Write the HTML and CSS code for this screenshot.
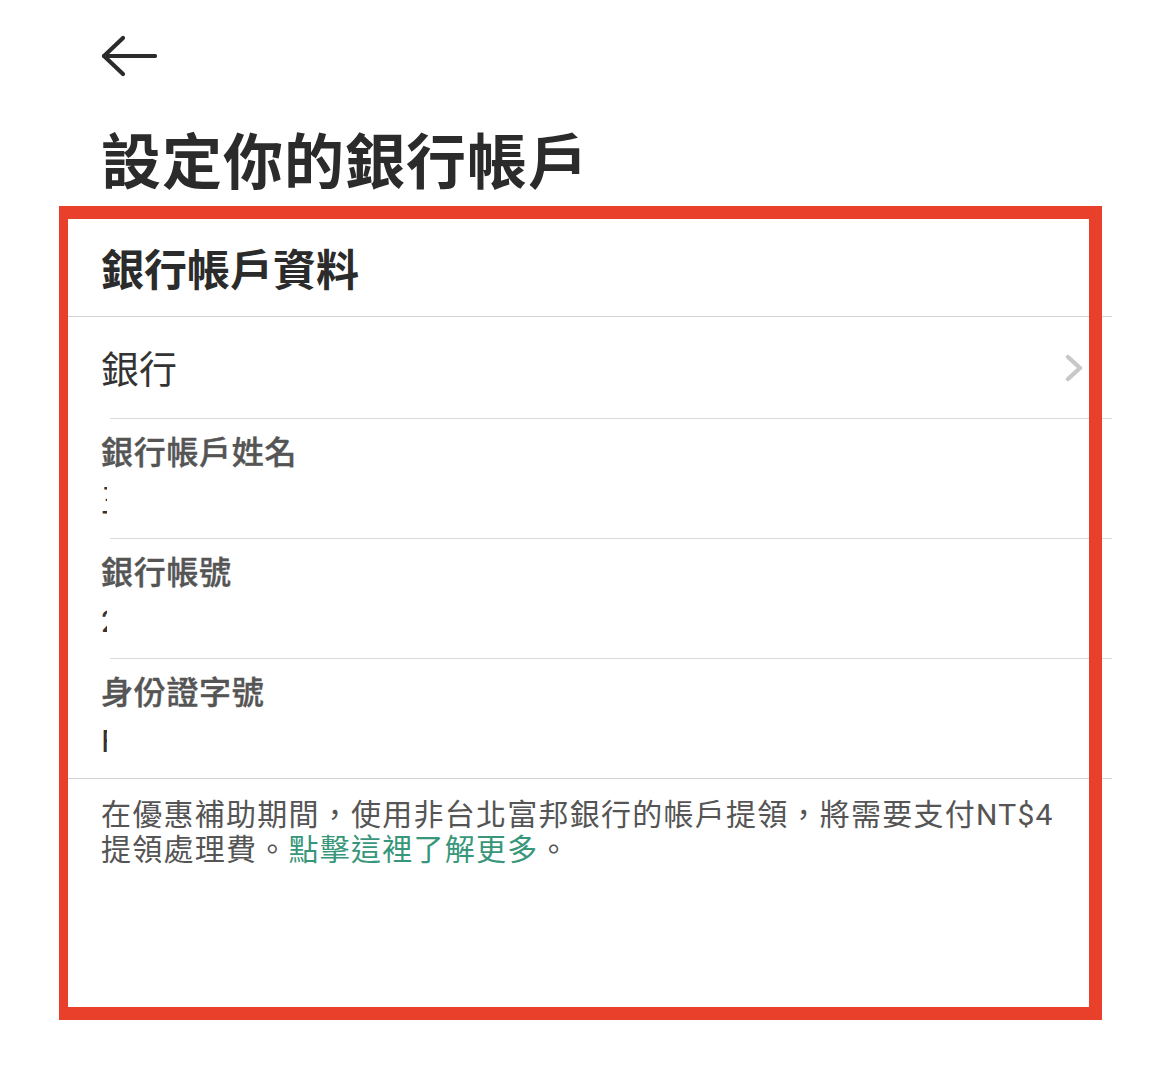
FILE: index.html
```html
<!DOCTYPE html>
<html lang="zh-Hant">
<head>
  <meta charset="UTF-8" />
  <meta name="viewport" content="width=device-width, initial-scale=1.0"/>
  <title>設定你的銀行帳戶</title>
  <link rel="stylesheet" href="styles.css">
</head>
<body>
  <div class="page">
    <div class="top">
      <button class="back" aria-label="返回">
        <svg width="56" height="42" viewBox="0 0 56 42" fill="none" stroke="#2b2b2b" stroke-width="4.2" stroke-linecap="round" stroke-linejoin="round">
          <path d="M3 21 H54" />
          <path d="M22 3 L3 21 L22 39" />
        </svg>
      </button>
      <h1 class="title">設定你的銀行帳戶</h1>
    </div>

    <div class="form">
      <div class="section-title">銀行帳戶資料</div>

      <div class="row bank">
        <span>銀行</span>
        <svg class="chevron" width="18" height="28" viewBox="0 0 18 28" fill="none" stroke="#c8c8c8" stroke-width="4.4" stroke-linecap="round" stroke-linejoin="round">
          <path d="M3 3 L15 14 L3 25" />
        </svg>
      </div>

      <div class="row field">
        <div class="label">銀行帳戶姓名</div>
        <div class="value"><span class="masked">王</span></div>
      </div>

      <div class="row field">
        <div class="label">銀行帳號</div>
        <div class="value"><span class="masked">2</span></div>
      </div>

      <div class="row field last">
        <div class="label">身份證字號</div>
        <div class="value"><span class="masked">F</span></div>
      </div>

      <p class="note">在優惠補助期間，使用非台北富邦銀行的帳戶提領，將需要支付NT$4提領處理費。<a href="#" class="link">點擊這裡了解更多</a>。</p>
    </div>
  </div>

  <div class="highlight"></div>
</body>
</html>
```

FILE: styles.css
```css
* {
  box-sizing: border-box;
}

body {
  margin: 0;
  background: #ffffff;
  font-family: Roboto, "Noto Sans CJK TC", sans-serif;
  color: #2b2b2b;
}

.page {
  margin-left: 60px;
  width: 1052px;
}

.top {
  padding: 35px 0 0 41px;
}

.back {
  display: block;
  padding: 0;
  border: none;
  background: none;
  cursor: pointer;
}

.back svg {
  display: block;
}

.title {
  margin: 51px 0 0;
  font-size: 60px;
  line-height: 72px;
  font-weight: 700;
  letter-spacing: 1px;
}

.section-title {
  padding: 43px 0 17px 41px;
  font-size: 43px;
  line-height: 56px;
  font-weight: 700;
  border-bottom: 1px solid #d4d4d4;
}

.row {
  padding-left: 41px;
  background: linear-gradient(#d9d9d9, #d9d9d9) no-repeat left 50px bottom / calc(100% - 50px) 1px;
}

.bank {
  display: flex;
  align-items: center;
  justify-content: space-between;
  height: 102px;
  padding-right: 29px;
  padding-bottom: 4px;
  font-size: 38px;
  color: #333333;
}

.chevron {
  display: block;
  margin-top: 3px;
}

.field {
  height: 120px;
  padding-top: 14px;
}

.label {
  font-size: 32px;
  line-height: 40px;
  font-weight: 500;
  color: #555555;
  letter-spacing: 0.7px;
  -webkit-text-stroke: 0.4px #555555;
}

.value {
  margin-top: 8px;
  font-size: 32px;
  line-height: 40px;
  color: #333333;
}

.masked {
  display: inline-block;
  width: 6px;
  overflow: hidden;
  white-space: nowrap;
  vertical-align: top;
}

.last {
  background: none;
  border-bottom: 1px solid #d4d4d4;
}

.note {
  margin: 0;
  padding: 18px 40px 0 41px;
  font-size: 30px;
  line-height: 35px;
  letter-spacing: 1.25px;
  color: #555555;
}

.link {
  color: #38967a;
  text-decoration: none;
}

.highlight {
  position: absolute;
  left: 59px;
  top: 206px;
  width: 1043px;
  height: 814px;
  border: 13px solid #e8402a;
  border-left-width: 9px;
  pointer-events: none;
}
```
